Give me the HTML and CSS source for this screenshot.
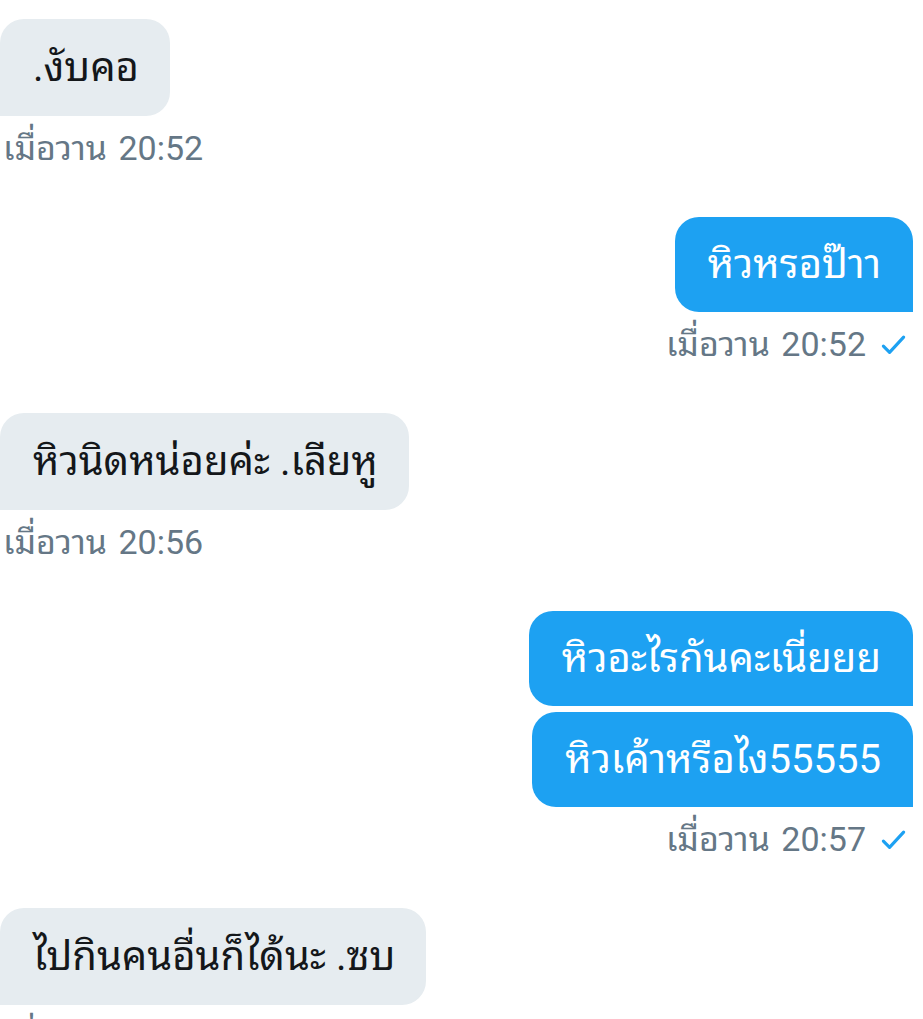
FILE: index.html
```html
<!DOCTYPE html>
<html lang="th">
  <head>
    <meta charset="utf-8" />
    <link rel="stylesheet" href="styles.css">
    <title>Messages</title>
  </head>
  <body>
    <div class="thread">
      <div class="group received">
        <div class="bubble">.งับคอ</div>
        <div class="meta">เมื่อวาน 20:52</div>
      </div>

      <div class="group sent">
        <div class="bubble">หิวหรอป๊าา</div>
        <div class="meta">เมื่อวาน 20:52
          <svg class="check" viewBox="0 0 24 24"><path d="M3 13.5l5.5 5.5L21 5.5"/></svg>
        </div>
      </div>

      <div class="group received">
        <div class="bubble">หิวนิดหน่อยค่ะ .เลียหู</div>
        <div class="meta">เมื่อวาน 20:56</div>
      </div>

      <div class="group sent">
        <div class="bubble">หิวอะไรกันคะเนี่ยยย</div>
        <div class="bubble">หิวเค้าหรือไง55555</div>
        <div class="meta">เมื่อวาน 20:57
          <svg class="check" viewBox="0 0 24 24"><path d="M3 13.5l5.5 5.5L21 5.5"/></svg>
        </div>
      </div>

      <div class="group received">
        <div class="bubble">ไปกินคนอื่นก็ได้นะ .ซบ</div>
        <div class="meta">เมื่อวาน 20:58</div>
      </div>
    </div>
  </body>
</html>
```

FILE: styles.css
```css
body {
  margin: 0;
  background: #fff;
  font-family: Roboto, "Noto Sans Thai Looped", "Noto Sans", sans-serif;
  overflow: hidden;
}

.thread {
  display: flex;
  flex-direction: column;
  padding: 19px 10px 0 0;
}

.group {
  display: flex;
  flex-direction: column;
  gap: 6px;
  margin-bottom: 47px;
}

.received {
  align-items: flex-start;
}

.sent {
  align-items: flex-end;
}

.bubble {
  font-size: 40px;
  line-height: 48px;
  border-radius: 24px;
}

.received .bubble {
  padding: 25px 31px 24px 33px;
  background: #e6ecf0;
  color: #14171a;
  border-bottom-left-radius: 0;
}

.sent .bubble {
  padding: 24px 32px 23px 33px;
  background: #1da1f2;
  color: #fff;
  border-bottom-right-radius: 0;
}

.meta {
  display: flex;
  align-items: center;
  gap: 14px;
  margin-top: 4px;
  font-size: 34px;
  line-height: 44px;
  word-spacing: 3px;
  color: #657786;
  padding-left: 3px;
}

.sent .meta {
  padding-left: 0;
  padding-right: 6px;
}

.check {
  width: 27px;
  height: 27px;
  fill: none;
  stroke: #1da1f2;
  stroke-width: 2.8;
  stroke-linecap: round;
  stroke-linejoin: round;
}
```
